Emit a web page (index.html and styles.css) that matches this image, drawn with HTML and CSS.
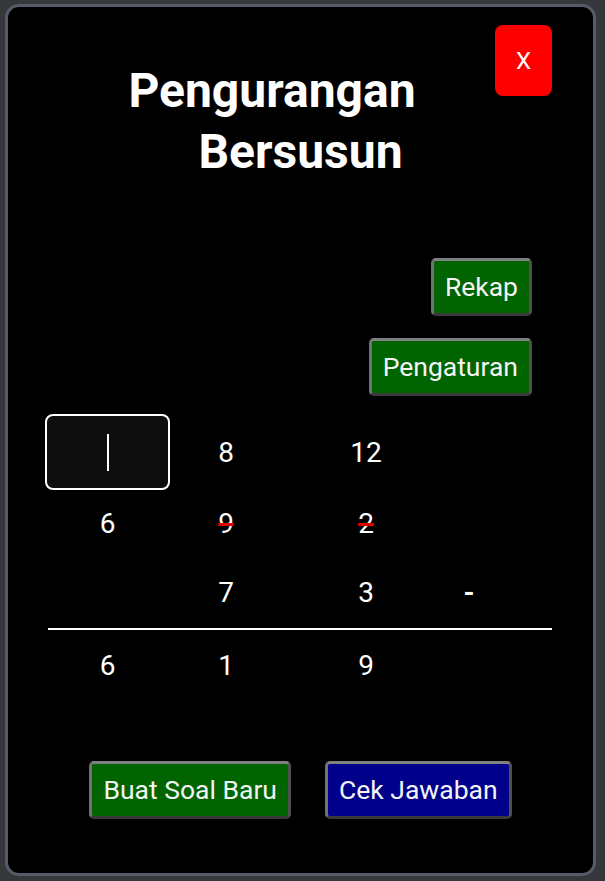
FILE: index.html
```html
<!DOCTYPE html>
<html lang="id">
<head>
<meta charset="utf-8">
<title>Pengurangan Bersusun</title>
<link rel="stylesheet" href="styles.css">
</head>
<body>
<div class="modal">
  <div class="header">
    <h1 class="title"><span class="line1">Pengurangan</span><span class="line2">Bersusun</span></h1>
    <button class="btn-close">X</button>
  </div>
  <div class="side-actions">
    <button class="btn btn-green">Rekap</button>
    <button class="btn btn-green">Pengaturan</button>
  </div>
  <div class="sum">
    <div class="row r1">
      <div class="cell"><div class="input-box"><span class="caret"></span></div></div>
      <div class="cell">8</div>
      <div class="cell">12</div>
      <div class="cell"></div>
    </div>
    <div class="row r2">
      <div class="cell">6</div>
      <div class="cell"><span class="struck">9</span></div>
      <div class="cell"><span class="struck">2</span></div>
      <div class="cell"></div>
    </div>
    <div class="row r3">
      <div class="cell"></div>
      <div class="cell">7</div>
      <div class="cell">3</div>
      <div class="cell minus">-</div>
    </div>
    <div class="rule"></div>
    <div class="row r4">
      <div class="cell">6</div>
      <div class="cell">1</div>
      <div class="cell">9</div>
      <div class="cell"></div>
    </div>
  </div>
  <div class="bottom-actions">
    <button class="btn btn-green">Buat Soal Baru</button>
    <button class="btn btn-blue">Cek Jawaban</button>
  </div>
</div>
</body>
</html>
```
FILE: styles.css
```css
html, body {
  margin: 0;
  padding: 0;
  background: #35373b;
}
body {
  padding: 4px 9px 5px 5px;
  font-family: Roboto, "Liberation Sans", Arial, sans-serif;
  color: #fff;
}
.modal {
  box-sizing: border-box;
  width: 591px;
  height: 872px;
  border: 3px solid #565b69;
  border-radius: 14px;
  background: #000;
  overflow: hidden;
}
.header {
  display: grid;
  margin-top: 18px;
}
.title {
  grid-area: 1 / 1;
  margin: 35px 0 0 0;
  font-size: 48px;
  line-height: 61px;
  font-weight: 700;
  text-align: center;
}
.title span {
  display: block;
}
.title .line1 {
  padding-right: 57px;
}
.btn-close {
  grid-area: 1 / 1;
  justify-self: end;
  align-self: start;
  margin-right: 41px;
  width: 57px;
  height: 71px;
  border: none;
  border-radius: 8px;
  background: #ff0000;
  color: #fff;
  font-family: Roboto, "Liberation Sans", Arial, sans-serif;
  font-size: 24px;
  padding: 0;
}
.side-actions {
  display: flex;
  flex-direction: column;
  align-items: flex-end;
  gap: 22px;
  margin-top: 76px;
  padding-right: 61px;
}
.btn {
  box-sizing: border-box;
  height: 58px;
  padding: 0 11px;
  border: 3px solid;
  border-color: #808080 #505050 #3a3a3a #727272;
  border-radius: 5px;
  color: #f4f4f4;
  font-family: Roboto, "Liberation Sans", Arial, sans-serif;
  font-size: 26.5px;
  line-height: 30px;
}
.btn-green {
  background: #006400;
}
.btn-blue {
  background: #00008b;
}
.sum {
  margin-top: 18px;
  padding-left: 37px;
}
.row {
  display: grid;
  grid-template-columns: 125px 112px 168px 38px;
  align-items: center;
  font-size: 28px;
}
.cell {
  text-align: center;
}
.r1 { height: 76px; }
.r2 { height: 66px; }
.r3 { height: 72px; }
.r4 { height: 70px; }
.input-box {
  box-sizing: border-box;
  width: 125px;
  height: 76px;
  border: 2px solid #fff;
  border-radius: 8px;
  background: #0e0e0e;
  display: flex;
  align-items: center;
  justify-content: center;
}
.caret {
  display: block;
  width: 2px;
  height: 37px;
  background: #fff;
}
.struck {
  text-decoration: line-through;
  text-decoration-color: #e00000;
  text-decoration-thickness: 3px;
}
.minus {
  font-weight: 700;
}
.rule {
  width: 504px;
  height: 2px;
  margin-left: 3px;
  background: #fff;
}
.bottom-actions {
  display: flex;
  justify-content: center;
  gap: 34px;
  margin-top: 61px;
}
```
